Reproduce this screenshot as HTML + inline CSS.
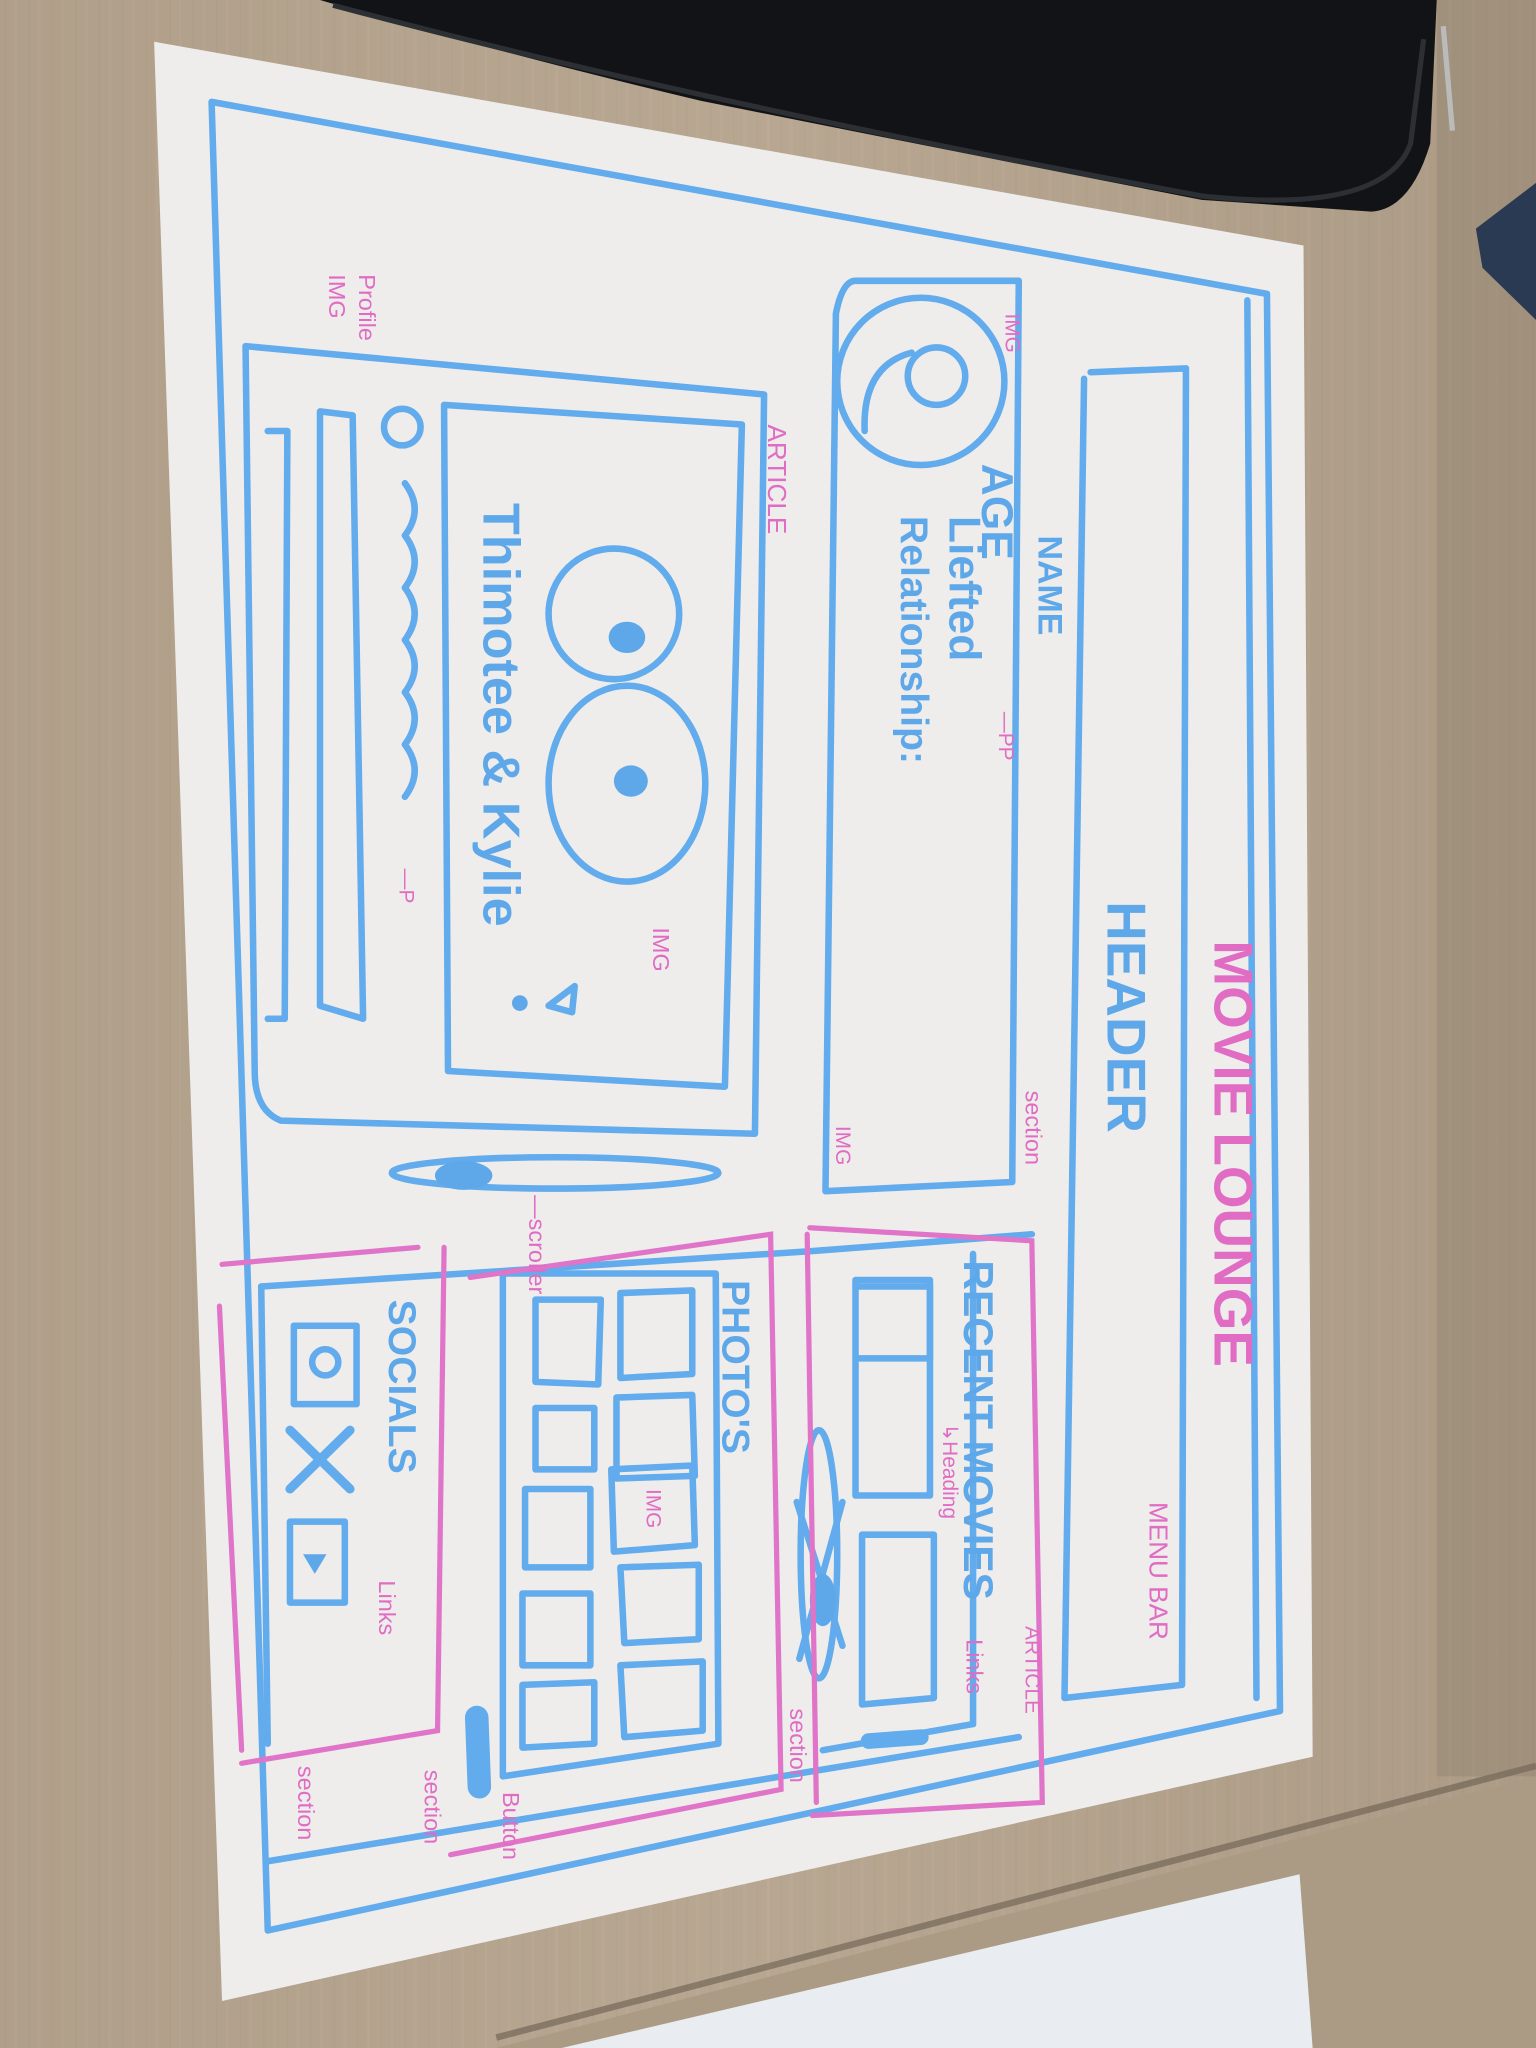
<!DOCTYPE html>
<html><head><meta charset="utf-8"><style>
html,body{margin:0;padding:0;width:1536px;height:2048px;overflow:hidden;background:#b5a48f}
svg{display:block}
text{font-family:"Liberation Sans",sans-serif}
</style></head><body>
<svg width="1536" height="2048" viewBox="0 0 1176 1568" xmlns="http://www.w3.org/2000/svg">
<defs>
<linearGradient id="wood" x1="0" y1="0" x2="1" y2="0">
<stop offset="0" stop-color="#ad9c87"/><stop offset="0.5" stop-color="#bcab96"/><stop offset="1" stop-color="#a5947f"/>
</linearGradient>
<pattern id="grain" width="18" height="1568" patternUnits="userSpaceOnUse">
<rect width="18" height="1568" fill="#b3a28c"/>
<line x1="4" y1="0" x2="4" y2="1568" stroke="#a3917b" stroke-width="1.5" opacity="0.35"/>
<line x1="12" y1="0" x2="12" y2="1568" stroke="#c4b49f" stroke-width="2" opacity="0.35"/>
</pattern>
</defs>
<rect width="1176" height="1568" fill="url(#grain)"/>
<rect width="1176" height="1568" fill="url(#wood)" opacity="0.5"/>
<!-- lower table -->
<polygon points="380,1568 1176,1360 1176,1568" fill="#ab9a84"/>
<line x1="380" y1="1560" x2="1176" y2="1352" stroke="#6a5d50" stroke-width="5" opacity="0.6"/>
<rect x="1100" y="0" width="76" height="1360" fill="#7d6e5f" opacity="0.25"/>
<!-- white paper bottom -->
<polygon points="430,1568 995,1435 1005,1568" fill="#e9ecf0"/>
<!-- black bag -->
<path d="M245,0 L1100,0 L1095,110 Q1080,160 1050,162 L920,153 Q700,110 536,77 Q380,40 245,0 Z" fill="#111316"/>
<path d="M255,4 Q540,80 920,150 Q1060,165 1080,110 L1090,30" fill="none" stroke="#2c2f33" stroke-width="4"/>
<path d="M1105,20 L1112,100" stroke="#bbb" stroke-width="4"/>
<polygon points="1130,175 1176,140 1176,245 1135,205" fill="#2a3a52"/>
<!-- paper -->
<polygon points="118,32 998,188 1005,1345 170,1532" fill="#eeedeb"/>
<g fill="none" stroke="#62abec" stroke-width="5" stroke-linecap="round" stroke-linejoin="round">
<path d="M162,78 L970,225 L980,1310 L205,1478 Z"/>
<path d="M955,230 L962,1300"/>
<path d="M835,285 L908,282 L905,1290 L815,1300 L830,290"/>
<path d="M655,215 L780,215 L775,905 L632,912 L640,240 Q645,215 655,215"/>
<circle cx="705" cy="292" r="64"/>
<circle cx="717" cy="288" r="22"/>
<path d="M662,330 Q660,280 698,270"/>
<path d="M188,265 L585,302 L578,868 L215,858 Q195,850 195,820 Z"/>
<path d="M340,310 L568,325 L555,832 L343,820 Z"/>
<path d="M205,330 L220,330 L218,780 L205,780"/>
<path d="M245,315 L270,318 L278,780 L245,770 Z"/>
<circle cx="308" cy="327" r="14"/>
<ellipse cx="470" cy="470" rx="50" ry="50"/>
<ellipse cx="480" cy="600" rx="60" ry="75"/>
<path d="M420,770 L440,755 L438,775 Z"/>
<path d="M310,370 Q325,390 310,410 Q325,430 310,450 Q325,470 310,490 Q325,510 310,530 Q325,550 310,570 Q325,590 310,610"/>
<ellipse cx="425" cy="898" rx="125" ry="12"/>
<path d="M200,985 L620,958 L790,945"/>
<path d="M205,1425 L780,1330"/>
<path d="M655,980 L712,980 L712,1145 L655,1145 Z"/>
<path d="M655,985 L712,985 L712,1040 L658,1040"/>
<path d="M660,1175 L715,1175 L715,1300 L660,1305 Z"/>
<path d="M745,960 L745,1320 L630,1340"/>
<ellipse cx="627" cy="1190" rx="14" ry="95"/>
<path d="M610,1150 L645,1260 M645,1150 L612,1270"/>
<path d="M665,1333 L705,1330" stroke-width="12"/>
<path d="M385,975 L548,975 L550,1335 L385,1360 Z"/>
<path d="M410,995 L460,995 L458,1060 L410,1058 Z M475,990 L530,988 L530,1052 L475,1055 Z"/>
<path d="M410,1078 L455,1078 L455,1125 L410,1125 Z M472,1070 L530,1068 L532,1130 L472,1132 Z"/>
<path d="M402,1140 L452,1140 L452,1200 L402,1200 Z M468,1125 L530,1122 L532,1183 L470,1188 Z"/>
<path d="M400,1220 L452,1220 L452,1275 L400,1275 Z M475,1200 L535,1198 L535,1255 L478,1258 Z"/>
<path d="M400,1290 L455,1288 L455,1335 L400,1338 Z M475,1275 L538,1272 L538,1325 L478,1330 Z"/>
<path d="M365,1315 L367,1368" stroke-width="18"/>
<path d="M200,985 L205,1335"/>
<rect x="225" y="1015" width="48" height="60"/>
<circle cx="249" cy="1043" r="10"/>
<path d="M222,1095 L268,1140 M268,1095 L222,1140" stroke-width="7"/>
<rect x="222" y="1165" width="42" height="62"/>
</g>
<g fill="#5ea8ea">
<ellipse cx="480" cy="488" rx="14" ry="12"/>
<ellipse cx="483" cy="598" rx="13" ry="12"/>
<circle cx="398" cy="768" r="6"/>
<ellipse cx="355" cy="900" rx="22" ry="11"/>
<ellipse cx="630" cy="1225" rx="10" ry="20"/>
<path d="M232,1190 L250,1190 L241,1205 Z"/>
</g>
<g fill="none" stroke="#e074c8" stroke-width="4" stroke-linecap="round">
<path d="M620,940 L790,950 L798,1380 L622,1390"/>
<path d="M618,945 L625,1380"/>
<path d="M360,978 L590,945 L598,1370 L345,1420"/>
<path d="M170,968 L320,955"/>
<path d="M168,1000 L185,1340"/>
<path d="M340,955 L335,1325 L185,1350"/>
</g>
<g fill="#5ea8ea" font-weight="bold">
<text transform="translate(848,690) rotate(90)" font-size="42">HEADER</text>
<text transform="translate(795,410) rotate(90)" font-size="26">NAME</text>
<text transform="translate(752,355) rotate(90)" font-size="34">AGE</text>
<text transform="translate(727,395) rotate(90)" font-size="34">Liefted</text>
<text transform="translate(690,395) rotate(90)" font-size="30">Relationship:</text>
<text transform="translate(370,385) rotate(90)" font-size="40">Thimotee &amp; Kylie</text>
<text transform="translate(738,965) rotate(90)" font-size="32" textLength="260" lengthAdjust="spacingAndGlyphs">RECENT MOVIES</text>
<text transform="translate(553,980) rotate(90)" font-size="30">PHOTO'S</text>
<text transform="translate(298,995) rotate(90)" font-size="30">SOCIALS</text>
</g>
<g fill="#e06cc4">
<text transform="translate(930,720) rotate(90)" font-size="42" font-weight="bold">MOVIE LOUNGE</text>
<text transform="translate(880,1150) rotate(90)" font-size="20">MENU BAR</text>
<text transform="translate(588,325) rotate(90)" font-size="20">ARTICLE</text>
<text transform="translate(785,835) rotate(90)" font-size="18">section</text>
<text transform="translate(770,240) rotate(90)" font-size="16">IMG</text>
<text transform="translate(640,862) rotate(90)" font-size="16">IMG</text>
<text transform="translate(765,545) rotate(90)" font-size="16">—PP</text>
<text transform="translate(500,710) rotate(90)" font-size="18">IMG</text>
<text transform="translate(275,210) rotate(90)" font-size="18">Profile</text>
<text transform="translate(252,210) rotate(90)" font-size="18">IMG</text>
<text transform="translate(306,665) rotate(90)" font-size="16">—P</text>
<text transform="translate(405,915) rotate(90)" font-size="18">—scroller</text>
<text transform="translate(722,1090) rotate(90)" font-size="16">↳Heading</text>
<text transform="translate(740,1255) rotate(90)" font-size="18">Links</text>
<text transform="translate(785,1245) rotate(90)" font-size="16">ARTICLE</text>
<text transform="translate(605,1308) rotate(90)" font-size="18">section</text>
<text transform="translate(495,1140) rotate(90)" font-size="16">IMG</text>
<text transform="translate(385,1372) rotate(90)" font-size="18">Button</text>
<text transform="translate(325,1355) rotate(90)" font-size="18">section</text>
<text transform="translate(290,1210) rotate(90)" font-size="18">Links</text>
<text transform="translate(228,1352) rotate(90)" font-size="18">section</text>
</g>
</svg>
</body></html>
